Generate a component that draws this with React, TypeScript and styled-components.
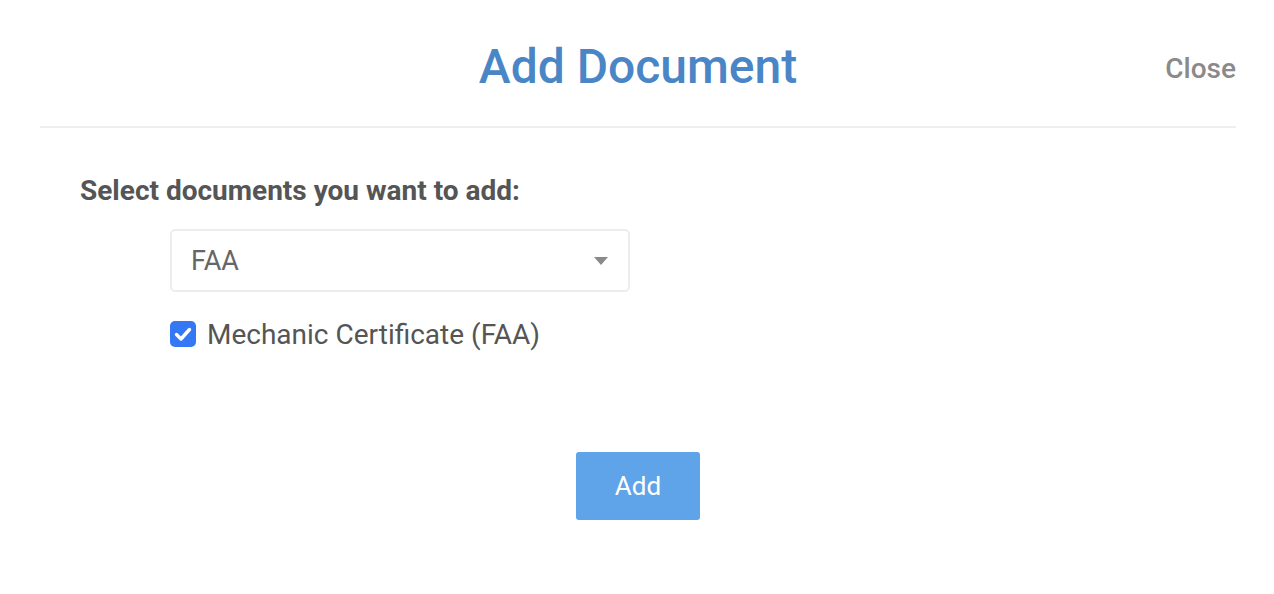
import styled, { createGlobalStyle } from "styled-components";

const GlobalStyle = createGlobalStyle`
    html, body {
        margin: 0;
        padding: 0;
        background: #ffffff;
    }
    body {
        font-family: Roboto, "Liberation Sans", Arial, sans-serif;
    }
`;

function App() {
    return (
        <>
            <GlobalStyle />
            <Modal>
                <Header>
                    <Title>Add Document</Title>
                    <CloseLink>Close</CloseLink>
                </Header>

                <Body>
                    <Label>Select documents you want to add:</Label>

                    <Fields>
                        <SelectBox>
                            <SelectValue>FAA</SelectValue>
                            <Caret viewBox="0 0 14 8">
                                <path d="M0 0 L14 0 L7 8 Z" fill="#8a8a8a" />
                            </Caret>
                        </SelectBox>

                        <CheckRow>
                            <CheckBox>
                                <svg viewBox="0 0 26 26" width="26" height="26">
                                    <path d="M6.5 13.5 L11 18 L19.5 8.5" fill="none" stroke="#fff" strokeWidth="3.4" strokeLinecap="round" strokeLinejoin="round" />
                                </svg>
                            </CheckBox>
                            <CheckLabel>Mechanic Certificate (FAA)</CheckLabel>
                        </CheckRow>
                    </Fields>
                </Body>

                <Footer>
                    <AddButton type="button">Add</AddButton>
                </Footer>
            </Modal>
        </>
    );
}

const Modal = styled.div`
    width: 1274px;
    height: 594px;
    box-sizing: border-box;
    padding: 0 38px 0 40px;
    background: #fff;
    display: flex;
    flex-direction: column;
`

const Header = styled.div`
    position: relative;
    height: 126px;
    border-bottom: 2px solid #eeeeee;
    display: flex;
    align-items: center;
    justify-content: center;
`

const Title = styled.h1`
    margin: 0;
    font-family: Roboto, sans-serif;
    font-weight: 500;
    font-size: 48px;
    color: #4a86c6;
    transform: translateY(3px);
`

const CloseLink = styled.span`
    position: absolute;
    right: 0;
    top: 52px;
    font-family: Roboto, sans-serif;
    font-weight: 500;
    font-size: 28px;
    color: #8a8a8a;
    cursor: pointer;
`

const Body = styled.div`
    padding: 46px 0 0 40px;
`

const Label = styled.div`
    font-family: Roboto, sans-serif;
    font-weight: 700;
    font-size: 28px;
    line-height: 33px;
    color: #555555;
`

const Fields = styled.div`
    padding: 22px 0 0 90px;
    display: flex;
    flex-direction: column;
    gap: 26px;
`

const SelectBox = styled.div`
    width: 460px;
    height: 63px;
    box-sizing: border-box;
    border: 2px solid #ededed;
    border-radius: 5px;
    padding: 0 20px 0 19px;
    display: flex;
    align-items: center;
    justify-content: space-between;
`

const SelectValue = styled.span`
    font-family: Roboto, sans-serif;
    font-size: 27px;
    color: #666666;
`

const Caret = styled.svg`
    width: 14px;
    height: 8px;
`

const CheckRow = styled.label`
    display: flex;
    align-items: center;
    gap: 11px;
    height: 32px;
`

const CheckBox = styled.span`
    width: 26px;
    height: 26px;
    border-radius: 5px;
    background: #3478f6;
    display: flex;
`

const CheckLabel = styled.span`
    font-family: Roboto, sans-serif;
    font-size: 28px;
    color: #555555;
`

const Footer = styled.div`
    display: flex;
    justify-content: center;
    padding-top: 102px;
`

const AddButton = styled.button`
    width: 124px;
    height: 68px;
    border: none;
    border-radius: 3px;
    background: #5fa3e8;
    color: #fff;
    font-family: Roboto, sans-serif;
    font-size: 26px;
`

export default App;
